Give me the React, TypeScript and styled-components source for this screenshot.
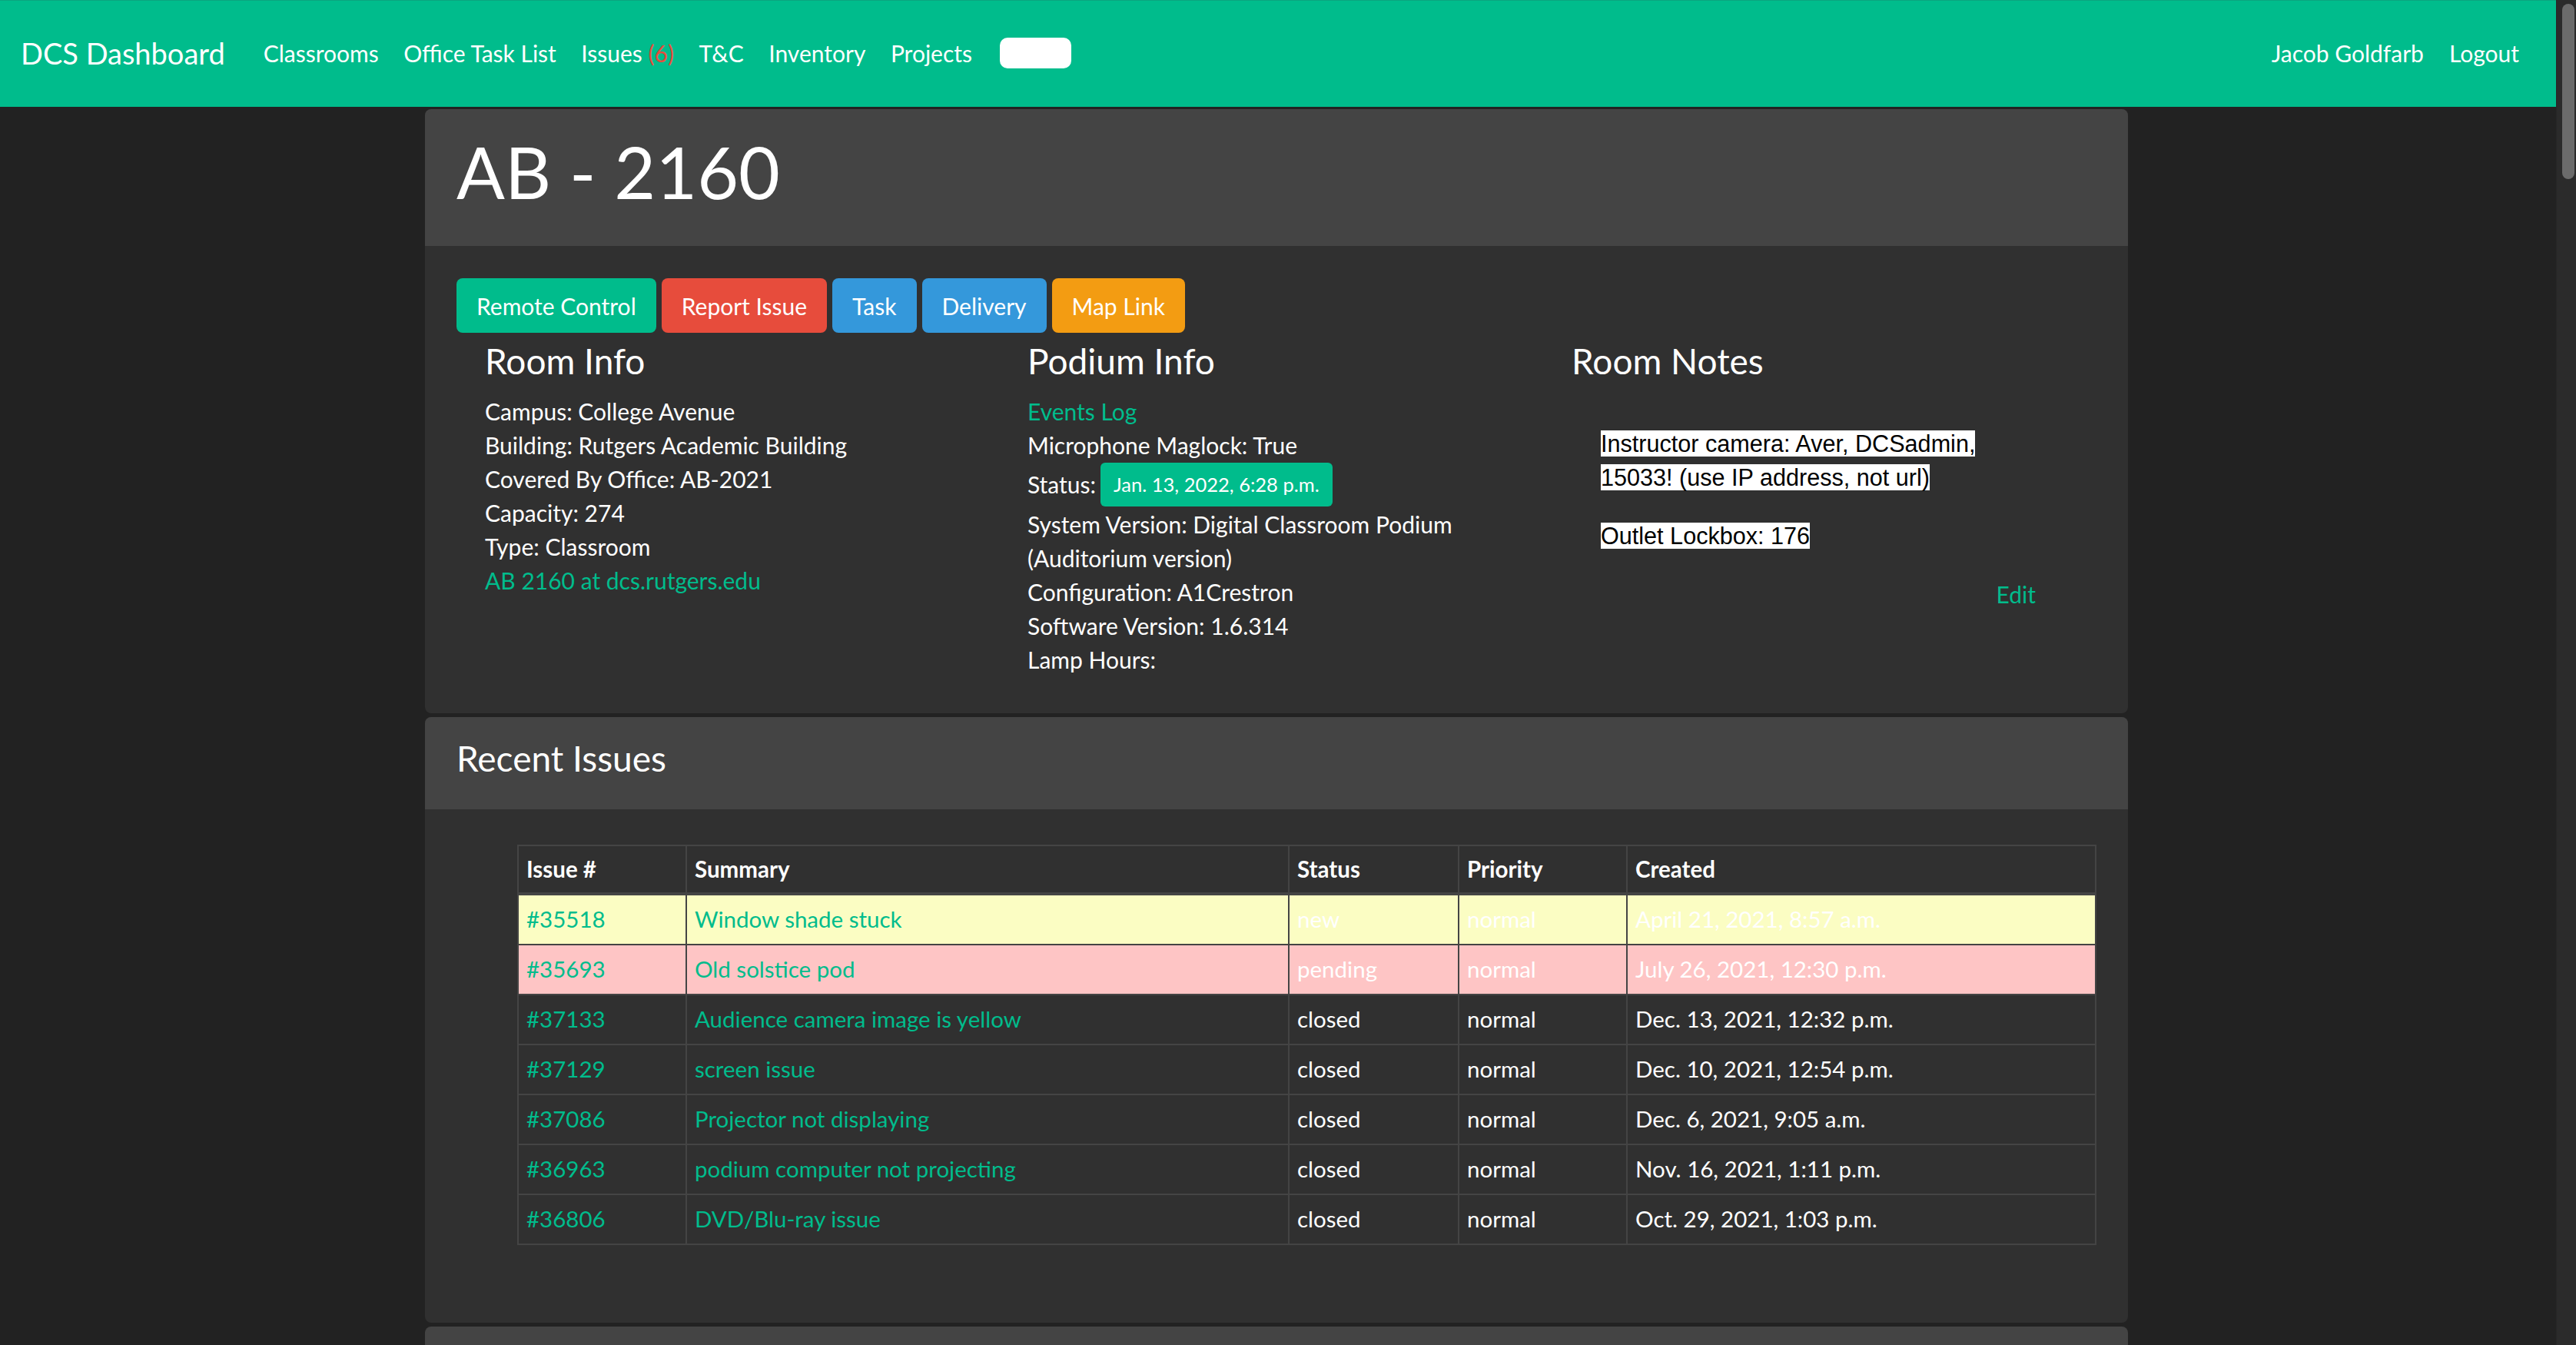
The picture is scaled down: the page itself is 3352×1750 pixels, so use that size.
import React from 'react';
import styled, { createGlobalStyle } from 'styled-components';

const GlobalStyle = createGlobalStyle`
  html, body {
    margin: 0;
    padding: 0;
    background: #222222;
    overflow: hidden;
  }
  body {
    font-family: Lato, 'Noto Sans', sans-serif;
    color: #ffffff;
  }
  * {
    box-sizing: border-box;
  }
`;

interface IIssueRow {
  id: string;
  summary: string;
  status: string;
  priority: string;
  created: string;
  tone?: 'new' | 'pending';
}

const issues: IIssueRow[] = [
  { id: '#35518', summary: 'Window shade stuck', status: 'new', priority: 'normal', created: 'April 21, 2021, 8:57 a.m.', tone: 'new' },
  { id: '#35693', summary: 'Old solstice pod', status: 'pending', priority: 'normal', created: 'July 26, 2021, 12:30 p.m.', tone: 'pending' },
  { id: '#37133', summary: 'Audience camera image is yellow', status: 'closed', priority: 'normal', created: 'Dec. 13, 2021, 12:32 p.m.' },
  { id: '#37129', summary: 'screen issue', status: 'closed', priority: 'normal', created: 'Dec. 10, 2021, 12:54 p.m.' },
  { id: '#37086', summary: 'Projector not displaying', status: 'closed', priority: 'normal', created: 'Dec. 6, 2021, 9:05 a.m.' },
  { id: '#36963', summary: 'podium computer not projecting', status: 'closed', priority: 'normal', created: 'Nov. 16, 2021, 1:11 p.m.' },
  { id: '#36806', summary: 'DVD/Blu-ray issue', status: 'closed', priority: 'normal', created: 'Oct. 29, 2021, 1:03 p.m.' },
];

const roomInfo = [
  'Campus: College Avenue',
  'Building: Rutgers Academic Building',
  'Covered By Office: AB-2021',
  'Capacity: 274',
  'Type: Classroom',
];

const rowColors = {
  new: '#fbfdc3',
  pending: '#fec5c5',
};

const App = () => {
  return (
    <>
      <GlobalStyle />
      <Shell>
        <Page>
          <Navbar>
            <Brand>DCS Dashboard</Brand>
            <NavList>
              <NavLink>Classrooms</NavLink>
              <NavLink>Office Task List</NavLink>
              <NavLink>
                Issues <Count>(6)</Count>
              </NavLink>
              <NavLink>T&amp;C</NavLink>
              <NavLink>Inventory</NavLink>
              <NavLink>Projects</NavLink>
              <SearchBox readOnly value='' />
            </NavList>
            <NavRight>
              <NavLink>Jacob Goldfarb</NavLink>
              <NavLink>Logout</NavLink>
            </NavRight>
          </Navbar>

          <Container>
            <Panel>
              <TitleHeading>
                <RoomTitle>AB - 2160</RoomTitle>
              </TitleHeading>
              <RoomBody>
                <ButtonRow>
                  <Btn $bg='#00bc8c'>Remote Control</Btn>
                  <Btn $bg='#e74c3c'>Report Issue</Btn>
                  <Btn $bg='#3498db'>Task</Btn>
                  <Btn $bg='#3498db'>Delivery</Btn>
                  <Btn $bg='#f39c12'>Map Link</Btn>
                </ButtonRow>
                <InfoGrid>
                  <InfoColumn>
                    <SectionTitle>Room Info</SectionTitle>
                    {roomInfo.map((line) => (
                      <InfoLine key={line}>{line}</InfoLine>
                    ))}
                    <InfoLine>
                      <GreenLink>AB 2160 at dcs.rutgers.edu</GreenLink>
                    </InfoLine>
                  </InfoColumn>
                  <InfoColumn>
                    <SectionTitle>Podium Info</SectionTitle>
                    <InfoLine>
                      <GreenLink>Events Log</GreenLink>
                    </InfoLine>
                    <InfoLine>Microphone Maglock: True</InfoLine>
                    <StatusLine>
                      Status:
                      <StatusBadge>Jan. 13, 2022, 6:28 p.m.</StatusBadge>
                    </StatusLine>
                    <InfoLine>System Version: Digital Classroom Podium (Auditorium version)</InfoLine>
                    <InfoLine>Configuration: A1Crestron</InfoLine>
                    <InfoLine>Software Version: 1.6.314</InfoLine>
                    <InfoLine>Lamp Hours:</InfoLine>
                  </InfoColumn>
                  <InfoColumn>
                    <SectionTitle>Room Notes</SectionTitle>
                    <Notes>
                      <NoteParagraph>
                        <NoteText>Instructor camera: Aver, DCSadmin, 15033! (use IP address, not url)</NoteText>
                      </NoteParagraph>
                      <NoteParagraph>
                        <NoteText>Outlet Lockbox: 176</NoteText>
                      </NoteParagraph>
                    </Notes>
                    <EditLine>
                      <GreenLink>Edit</GreenLink>
                    </EditLine>
                  </InfoColumn>
                </InfoGrid>
              </RoomBody>
            </Panel>

            <Panel>
              <SectionHeading>
                <PanelTitle>Recent Issues</PanelTitle>
              </SectionHeading>
              <IssuesBody>
                <IssueTable>
                  <colgroup>
                    <col style={{ width: 219 }} />
                    <col style={{ width: 784 }} />
                    <col style={{ width: 221 }} />
                    <col style={{ width: 219 }} />
                    <col />
                  </colgroup>
                  <thead>
                    <tr>
                      <Th>Issue #</Th>
                      <Th>Summary</Th>
                      <Th>Status</Th>
                      <Th>Priority</Th>
                      <Th>Created</Th>
                    </tr>
                  </thead>
                  <tbody>
                    {issues.map((issue) => (
                      <IssueRow key={issue.id} $bg={issue.tone ? rowColors[issue.tone] : undefined}>
                        <Td>
                          <GreenLink>{issue.id}</GreenLink>
                        </Td>
                        <Td>
                          <GreenLink>{issue.summary}</GreenLink>
                        </Td>
                        <Td>{issue.status}</Td>
                        <Td>{issue.priority}</Td>
                        <Td>{issue.created}</Td>
                      </IssueRow>
                    ))}
                  </tbody>
                </IssueTable>
              </IssuesBody>
            </Panel>

            <Panel>
              <SectionHeading />
            </Panel>
          </Container>
        </Page>
        <ScrollTrack>
          <ScrollThumb />
        </ScrollTrack>
      </Shell>
    </>
  );
};

const Shell = styled.div`
  display: flex;
  width: 100vw;
  height: 100vh;
  overflow: hidden;
`;

const Page = styled.div`
  flex: 1;
  min-width: 0;
  overflow: hidden;
`;

const ScrollTrack = styled.div`
  width: 26px;
  flex-shrink: 0;
  background: #2b2b2b;
  border-left: 1px solid #262626;
  padding: 5px 2px 0 7px;
`;

const ScrollThumb = styled.div`
  height: 228px;
  background: #6b6b6b;
  border-radius: 8px;
`;

const Navbar = styled.nav`
  display: flex;
  align-items: center;
  height: 139px;
  padding: 0 48px 2px 27px;
  background: #00bc8c;
  border-top: 1px solid #0aa57f;
`;

const Brand = styled.a`
  font-size: 38px;
  color: #ffffff;
  cursor: pointer;
`;

const NavList = styled.div`
  display: flex;
  align-items: center;
  gap: 32.5px;
  margin-left: 50px;
`;

const NavRight = styled.div`
  display: flex;
  align-items: center;
  gap: 33px;
  margin-left: auto;
`;

const NavLink = styled.a`
  font-size: 30px;
  color: #ffffff;
  cursor: pointer;
  white-space: nowrap;
`;

const Count = styled.span`
  color: #e74c3c;
`;

const SearchBox = styled.input`
  width: 93px;
  height: 40px;
  margin-left: 3px;
  border: none;
  border-radius: 10px;
  background: #ffffff;
  outline: none;
`;

const Container = styled.main`
  width: 2216px;
  margin: 3px auto 0;
  position: relative;
  left: -2px;
`;

const Panel = styled.section`
  background: #303030;
  border-radius: 8px;
  margin-bottom: 5px;
  overflow: hidden;
`;

const TitleHeading = styled.header`
  height: 178px;
  padding: 26px 41px 0;
  background: #444444;
`;

const SectionHeading = styled.header`
  height: 120px;
  padding: 29px 41px 0;
  background: #444444;
`;

const RoomTitle = styled.h1`
  margin: 0;
  font-size: 93px;
  font-weight: 400;
  line-height: 1.2;
`;

const PanelTitle = styled.h2`
  margin: 0;
  font-size: 46px;
  font-weight: 400;
  line-height: 1.1;
`;

const RoomBody = styled.div`
  padding: 42px 41px 48px;
`;

const ButtonRow = styled.div`
  display: flex;
  gap: 7px;
`;

const Btn = styled.button<{ $bg: string }>`
  height: 71px;
  padding: 0 26px;
  border: none;
  border-radius: 8px;
  background: ${({ $bg }) => $bg};
  color: #ffffff;
  font-family: Lato, sans-serif;
  font-size: 30px;
  cursor: pointer;
`;

const InfoGrid = styled.div`
  display: grid;
  grid-template-columns: 706px 708px 1fr;
  margin-top: 12px;
  padding: 0 79px 0 37px;
`;

const InfoColumn = styled.div`
  padding-right: 60px;

  &:last-child {
    padding-right: 0;
  }
`;

const SectionTitle = styled.h3`
  margin: 0 0 17px;
  font-size: 46px;
  font-weight: 400;
  line-height: 1.1;
`;

const InfoLine = styled.div`
  font-size: 30px;
  line-height: 44px;
`;

const StatusLine = styled.div`
  display: flex;
  align-items: center;
  gap: 6px;
  height: 59px;
  font-size: 30px;
`;

const StatusBadge = styled.span`
  display: inline-flex;
  align-items: center;
  height: 57px;
  padding: 0 17px;
  border-radius: 6px;
  background: #00bc8c;
  font-size: 25.5px;
`;

const GreenLink = styled.a`
  color: #00bc8c;
  cursor: pointer;
`;

const Notes = styled.div`
  padding: 42px 0 0 38px;
  max-width: 570px;
`;

const NoteParagraph = styled.p`
  margin: 0 0 32px;
  font-family: 'Liberation Sans', Arial, sans-serif;
  font-size: 30.6px;
  line-height: 44px;
  color: #000000;
`;

const NoteText = styled.span`
  background: #ffffff;
`;

const EditLine = styled.div`
  font-size: 30px;
  line-height: 44px;
  text-align: right;
`;

const IssuesBody = styled.div`
  padding: 46px 41px 101px 120px;
`;

const IssueTable = styled.table`
  width: 2055px;
  border-collapse: collapse;
  table-layout: fixed;
  font-size: 29.5px;
  line-height: 44px;
`;

const Th = styled.th`
  padding: 8px 10px;
  border: 2px solid #444444;
  border-bottom-width: 4px;
  text-align: left;
  font-weight: 700;
`;

const IssueRow = styled.tr<{ $bg?: string }>`
  background: ${({ $bg }) => $bg ?? 'transparent'};
`;

const Td = styled.td`
  padding: 9.5px 10px;
  border: 2px solid #444444;
  white-space: nowrap;
`;

export default App;
